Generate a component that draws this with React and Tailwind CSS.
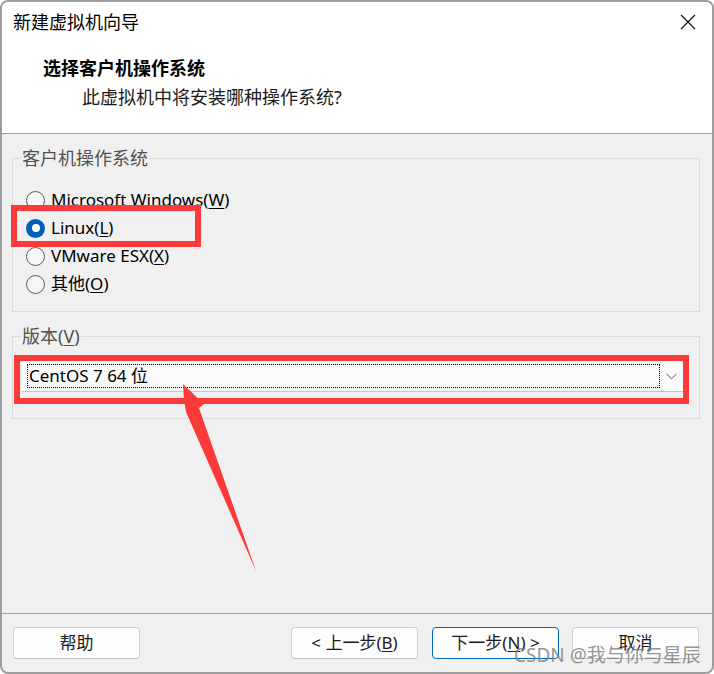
import React from 'react'

// Windows-style "new VM wizard" dialog, with the red screenshot annotations on top

const FONT = "font-['Noto_Sans','Noto_Sans_CJK_SC',sans-serif]"

function Radio({ checked, children }) {
  return (
    <div className="h-[28px] flex items-center pl-[13px]">
      {checked ? (
        <span className="w-[19px] h-[19px] rounded-full bg-[#005fb8] flex items-center justify-center">
          <span className="w-[8px] h-[8px] rounded-full bg-white" />
        </span>
      ) : (
        <span className="w-[19px] h-[19px] rounded-full border border-[#5d5d5d] bg-[#f6f6f6]" />
      )}
      <span className="ml-[6px] text-[17px] leading-[22px] text-black">{children}</span>
    </div>
  )
}

function Button({ primary, children, className = '' }) {
  return (
    <div
      className={`w-[127px] h-[32px] rounded-[4px] border flex items-center justify-center text-[17px] text-[#1b1b1b] bg-[#fdfdfd] ${
        primary ? 'border-[#0067c0]' : 'border-[#d0d0d0] border-b-[#c0c0c0]'
      } ${className}`}
    >
      {children}
    </div>
  )
}

export default function App() {
  return (
    <div className={`relative w-[714px] h-[674px] bg-white ${FONT}`}>
      <div className="w-[714px] h-[674px] border-2 border-[#9d9d9d] rounded-[8px] overflow-hidden flex flex-col bg-[#f0f0f0]">
        {/* header */}
        <div className="h-[132px] bg-white border-b border-[#a0a0a0] flex flex-col">
          <div className="h-[40px] flex items-center justify-between pl-[11px] pr-[16px]">
            <span className="text-[18px] leading-[24px] text-black">新建虚拟机向导</span>
            <svg width="16" height="16" viewBox="0 0 16 16">
              <path d="M1 1 L15 15 M15 1 L1 15" stroke="#1a1a1a" strokeWidth="1.3" fill="none" />
            </svg>
          </div>
          <div className="mt-[14px] pl-[41px] text-[18px] leading-[24px] font-bold text-black">选择客户机操作系统</div>
          <div className="mt-[5px] pl-[80px] text-[18px] leading-[24px] text-[#1a1a1a]">此虚拟机中将安装哪种操作系统?</div>
        </div>

        {/* body */}
        <div className="flex-1 pt-[12px] pl-[10px] pr-[12px]">
          <fieldset className="border border-[#dcdcdc] px-0">
            <legend className="ml-[8px] px-[1px] text-[18px] leading-[24px] text-[#505050]">客户机操作系统</legend>
            <div className="pt-[16px] pb-[13px]">
              <Radio>Microsoft Windows(<u className="underline-offset-2">W</u>)</Radio>
              <Radio checked>Linux(<u className="underline-offset-2">L</u>)</Radio>
              <Radio>VMware ESX(<u className="underline-offset-2">X</u>)</Radio>
              <Radio>其他(<u className="underline-offset-2">O</u>)</Radio>
            </div>
          </fieldset>

          <fieldset className="mt-[12px] border border-[#dcdcdc] px-0">
            <legend className="ml-[8px] px-[1px] text-[18px] leading-[24px] text-[#505050]">
              版本(<u className="underline-offset-2">V</u>)
            </legend>
            <div className="pt-[13px] pb-[26px] pl-[9px] pr-[16px]">
              <div className="h-[31px] bg-[#fbfbfb] border-b border-[#c4c4c4] flex items-center pl-[5px]">
                <div className="flex-1 h-[24px] border border-dotted border-black flex items-center pl-[1px]">
                  <span className="text-[17px] leading-[22px] text-black">CentOS 7 64 位</span>
                </div>
                <div className="w-[23px] flex items-center justify-center">
                  <svg width="11" height="7" viewBox="0 0 11 7">
                    <path d="M0.5 0.8 L5.5 5.8 L10.5 0.8" stroke="#5a5a5a" strokeWidth="1" fill="none" />
                  </svg>
                </div>
              </div>
            </div>
          </fieldset>
        </div>

        {/* footer */}
        <div className="border-t border-[#a0a0a0] pt-[13px] pb-[13px] pl-[11px] pr-[13px] flex items-center">
          <Button>帮助</Button>
          <div className="flex-1" />
          <Button>&lt; 上一步(<u className="underline-offset-2">B</u>)</Button>
          <Button primary className="ml-[14px]">下一步(<u className="underline-offset-2">N</u>) &gt;</Button>
          <Button className="ml-[13px]">取消</Button>
        </div>
      </div>

      {/* annotations */}
      <div className="absolute left-[11px] top-[205px] w-[190px] h-[42px] border-[6px] border-[#fc3a3a]" />
      <div className="absolute left-[14px] top-[355px] w-[675px] h-[49px] border-[6px] border-[#fc3a3a]" />
      <svg className="absolute left-0 top-0 pointer-events-none" width="714" height="674" viewBox="0 0 714 674">
        <polygon points="183,384 204,404 199,408 256,571 186,412 184,400" fill="#fc3a3a" />
      </svg>
      <div className="absolute left-[514px] top-[643px] text-[19px] leading-[24px] text-[#7a7a7a]/80 whitespace-nowrap">
        CSDN @我与你与星辰
      </div>
    </div>
  )
}
